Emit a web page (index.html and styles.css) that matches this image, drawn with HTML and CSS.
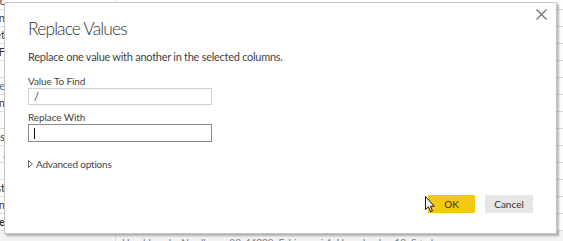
FILE: index.html
```html
<!DOCTYPE html>
<html lang="en">
<head>
    <meta charset="UTF-8">
    <title>Replace Values</title>
    <link rel="stylesheet" href="styles.css">
</head>
<body>
    <div class="screen">
        <!-- the table behind the dialog -->
        <div class="sheet">
            <div class="row"><span class="cell-a">Nordic</span><span class="cell-b"></span></div>
            <div class="row"><span class="cell-a">Column</span><span class="cell-b"></span></div>
            <div class="row"><span class="cell-a">Street</span><span class="cell-b"></span></div>
            <div class="row"><span class="cell-a">F</span><span class="cell-b"></span></div>
            <div class="row"><span class="cell-a"></span><span class="cell-b"></span></div>
            <div class="row"><span class="cell-a link">Code</span><span class="cell-b"></span></div>
            <div class="row"><span class="cell-a">Min</span><span class="cell-b"></span></div>
            <div class="row"><span class="cell-a"></span><span class="cell-b"></span></div>
            <div class="row"><span class="cell-a">Address</span><span class="cell-b"></span></div>
            <div class="row"><span class="cell-a link">.</span><span class="cell-b"></span></div>
            <div class="row"><span class="cell-a"></span><span class="cell-b"></span></div>
            <div class="row"><span class="cell-a">First</span><span class="cell-b"></span></div>
            <div class="row"><span class="cell-a">Main</span><span class="cell-b"></span></div>
            <div class="row"><span class="cell-a bold">Type</span><span class="cell-b"></span></div>
            <div class="row row-last"><span class="cell-a"></span><span class="cell-b">Haraldsgade, Nordhavn, 23-44009, Esbjergvej 4, Hovedgaden 12, Sønder...</span></div>
        </div>

        <!-- dialog -->
        <div class="dialog">
            <button class="close" type="button">
                <svg width="11" height="11" viewBox="0 0 11 11">
                    <path d="M0.5 0.5 L10.5 10.5 M10.5 0.5 L0.5 10.5" stroke="#6b6b6b" stroke-width="1.1" fill="none"/>
                </svg>
            </button>
            <h1 class="title">Replace Values</h1>
            <p class="sub">Replace one value with another in the selected columns.</p>

            <label class="label">Value To Find</label>
            <div class="input">/</div>

            <label class="label label-2">Replace With</label>
            <div class="input input-focus"><span class="caret"></span></div>

            <div class="advanced">
                <svg width="5" height="8" viewBox="0 0 5 8">
                    <path d="M0.5 0.5 L4.3 4 L0.5 7.5 Z" fill="none" stroke="#555" stroke-width="0.9"/>
                </svg>
                <span>Advanced options</span>
            </div>

            <div class="buttons">
                <button class="btn btn-ok" type="button">OK</button>
                <button class="btn btn-cancel" type="button">Cancel</button>
            </div>
        </div>

        <!-- mouse pointer over the OK button -->
        <svg class="cursor" width="10" height="17" viewBox="0 0 10 17">
            <path d="M0.5 0.5 L0.5 13.5 L3.5 10.8 L5.6 15.8 L7.4 15 L5.4 10.2 L9.2 10.2 Z" fill="#fff" stroke="#111" stroke-width="1"/>
        </svg>
    </div>
</body>
</html>
```

FILE: styles.css
```css
body{
    margin: 0;
    background: #fff;
    font-family: Lato, "Open Sans", sans-serif;
    color: #444;
}

.screen{
    position: relative;
    width: 563px;
    height: 241px;
    overflow: hidden;
}

/* table in the background */
.sheet{
    margin-top: -7px;
    display: flex;
    flex-direction: column;
}

.row{
    display: flex;
    height: 17px;
    border-bottom: 1px solid #dcdcdc;
    box-sizing: border-box;
    font-size: 11px;
    line-height: 16px;
    color: #333;
}

.row-last{
    height: 20px;
    padding-top: 3px;
    background: #f2f2f2;
}

.cell-a{
    width: 116px;
    flex: none;
    direction: rtl;
    text-align: right;
    white-space: nowrap;
    overflow: hidden;
    box-sizing: border-box;
    padding-right: 110px;
    border-right: 1px solid #dcdcdc;
}

.cell-a.link{
    color: #2a7aa8;
}

.cell-a.bold{
    font-weight: 700;
}

.cell-b{
    padding-left: 6px;
    white-space: nowrap;
    font-size: 10px;
    color: #777;
}

/* the dialog */
.dialog{
    position: absolute;
    left: 4px;
    top: 2px;
    width: 553px;
    height: 232px;
    box-sizing: border-box;
    background: #fff;
    border: 1px solid #c4c4c4;
    box-shadow: 2px 2px 2px rgba(0, 0, 0, 0.28);
    padding: 14px 23px 20px 23px;
    display: flex;
    flex-direction: column;
}

.close{
    position: absolute;
    top: 5px;
    right: 8px;
    width: 13px;
    height: 13px;
    padding: 1px;
    border: none;
    background: none;
    display: flex;
}

.title{
    margin: 0;
    font-size: 17.5px;
    line-height: 24px;
    font-weight: 300;
    letter-spacing: -0.9px;
    color: #333;
}

.sub{
    margin: 8px 0 0;
    font-size: 11px;
    line-height: 16px;
    letter-spacing: -0.27px;
}

.label{
    margin-top: 9px;
    font-size: 10px;
    line-height: 14px;
    letter-spacing: -0.1px;
}

.label-2{
    margin-top: 5px;
}

.input{
    width: 184px;
    height: 17px;
    box-sizing: border-box;
    border: 1px solid #d0d0d0;
    font-size: 11px;
    line-height: 15px;
    padding-left: 5px;
    color: #333;
}

.input-focus{
    height: 18px;
    border-color: #8a8a8a;
    display: flex;
    align-items: center;
}

.caret{
    width: 1px;
    height: 11px;
    background: #111;
}

.advanced{
    margin-top: 15px;
    display: flex;
    align-items: center;
    gap: 3px;
    font-size: 10px;
    line-height: 14px;
    letter-spacing: -0.2px;
}

.buttons{
    margin-top: auto;
    display: flex;
    justify-content: flex-end;
    gap: 10px;
}

.btn{
    height: 18px;
    padding: 0;
    border: none;
    font-family: Lato, "Open Sans", sans-serif;
    font-size: 10px;
    color: #333;
}

.btn-ok{
    width: 47px;
    background: #f2c811;
}

.btn-cancel{
    width: 48px;
    background: #e6e6e6;
}

.cursor{
    position: absolute;
    left: 425px;
    top: 196px;
}
```
